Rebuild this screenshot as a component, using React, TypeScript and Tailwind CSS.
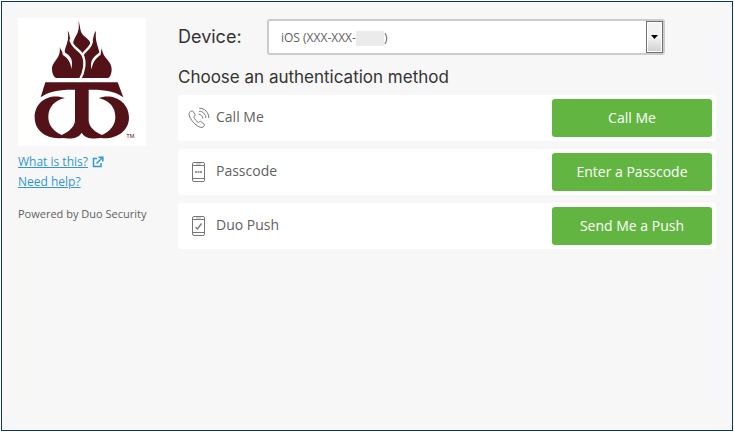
import type { ReactNode } from "react";

type MethodProps = {
  label: string;
  action: string;
  icon: ReactNode;
};

function Logo() {
  return (
    <svg viewBox="24 24 384 384" className="block w-full bg-white" role="img" aria-label="University logo">
      {/* Flames */}
      <g transform="translate(114 24)">
        <path
          fill="#521217"
          d="M24 180C15 174 12 165 12 152C13 128 40 122 35 86C39 99 45 104 51 105C47 88 66 74 59 38C68 50 62 66 76 76C76 55 98 50 91 8C100 30 92 42 113 58C123 66 127 72 127 78C140 66 132 54 144 38C140 72 152 84 154 105C160 101 161 96 162 86C160 120 192 126 191 154C191 166 188 175 181 180Z"
        />
        <path
          fill="none"
          stroke="#fff"
          strokeWidth="7"
          d="M67 64C72 90 92 92 103 110C114 130 110 160 95 186M104 111C108 98 130 92 132 68"
        />
        <path
          fill="#fff"
          d="M42 96C54 110 80 110 70 154C68 126 54 118 44 110ZM159 98C150 110 122 118 131 154C134 126 150 118 158 110Z"
        />
      </g>
      <path
        fill="#521217"
        d="M106 217H323L340 262C316 243 282 238 236 239V330C236 348 250 364 276 375C301 363 316 346 316 321C316 294 300 272 266 264C307 248 357 273 357 323C357 364 317 389 274 384C249 387 225 387 215 368C205 387 180 387 156 384C112 389 74 364 74 322C74 273 120 248 165 264C131 271 115 294 115 321C115 346 130 363 155 375C180 364 195 348 195 330V239C149 238 117 243 92 262Z"
      />
      <text x="349" y="384" fontSize="17" fill="#521217" className="font-['Liberation_Sans',sans-serif]">
        TM
      </text>
    </svg>
  );
}

function ExternalIcon() {
  return (
    <svg viewBox="0 0 12 12" className="size-3" fill="none" stroke="currentColor" strokeWidth="1.5" aria-hidden="true">
      <path d="M5 2.5H1.5V10.5H9V7M4.5 7.5L10 2M6.5 1.2H10.8V5.5" />
    </svg>
  );
}

function CallIcon() {
  return (
    <svg viewBox="0 0 22 22" className="size-[22px]" fill="none" stroke="currentColor" aria-hidden="true">
      <path d="M2.2 4.8L3.4 4.1C4.2 3.7 4.8 3.9 5.2 4.6L7 7.5C7.4 8.2 7.2 8.8 6.6 9.2L5.7 9.8C6.6 12.2 8.3 14.2 10.6 15.5L11.4 14.8C12 14.3 12.6 14.3 13.2 14.8L16 17C16.7 17.6 16.7 18.3 16.2 18.9L15.2 20C13.8 21 11.5 20.3 9.3 18.8C5.5 16.1 2.8 12.7 1.4 9C0.8 7.2 0.9 5.7 2.2 4.8Z" />
      <path d="M11.2 1.2C16.6 1.2 20.8 5.4 20.8 11M11 4.2C14.8 4.2 17.8 7.1 17.8 11M10.5 7.2C13 7.2 14.8 9 14.8 11.5" />
    </svg>
  );
}

function PhoneIcon({ children }: { children: ReactNode }) {
  return (
    <svg viewBox="0 0 22 22" className="size-[22px]" fill="none" stroke="currentColor" aria-hidden="true">
      <rect x="4.5" y="1.5" width="12" height="19" rx="1.5" />
      <path d="M4.5 4.5H16.5M4.5 17.5H16.5" />
      <path d="M8 3H13" strokeWidth="0.6" />
      {children}
    </svg>
  );
}

function Method({ label, action, icon }: MethodProps) {
  return (
    <li className="flex items-center justify-between rounded-[3px] bg-white p-1">
      <div className="flex items-center gap-1.5 pl-1.5 text-sm text-[#5f5f5f]">
        <span className="text-[#777]">{icon}</span>
        <span className="pb-0.5">{label}</span>
      </div>
      <button type="button" className="h-[38px] w-40 rounded-[3px] bg-[#63b541] text-sm text-white">
        {action}
      </button>
    </li>
  );
}

export default function App() {
  return (
    <div className="flex min-h-screen bg-white p-px font-['Open_Sans',sans-serif]">
      <div className="flex flex-1 items-start gap-8 border border-[#0f3557] bg-[#f7f7f7] p-4">
        <aside className="w-32 shrink-0">
          <Logo />
          <nav className="mt-1.5 flex flex-col text-xs leading-5 text-[#2f98d3]">
            <a href="#about" className="flex items-center gap-1">
              <span className="underline">What is this?</span>
              <ExternalIcon />
            </a>
            <a href="#help" className="underline">
              Need help?
            </a>
          </nav>
          <p className="mt-3 text-[11px] leading-5 whitespace-nowrap text-[#5f5f5f]">Powered by Duo Security</p>
        </aside>

        <main className="min-w-0 flex-1">
          <div className="flex items-center pt-px">
            <label htmlFor="device" className="w-[89px] font-[Inter,sans-serif] text-lg text-[#333]">
              Device:
            </label>
            <div className="relative mr-[51px] flex-1">
              <select
                id="device"
                className="block h-9 w-full appearance-none rounded-[3px] border-2 border-[#ccc] bg-white px-3 pt-0.5 text-xs text-[#5f5f5f]"
              >
                <option>{"iOS (XXX-XXX-" + "\u00a0".repeat(9) + ")"}</option>
              </select>
              {/* Masked digits */}
              <span className="pointer-events-none absolute top-3 left-[89px] h-[15px] w-7 bg-[#ebebeb]" />
              <span className="pointer-events-none absolute inset-y-[2px] right-[2px] flex w-[17px] items-center justify-center border border-[#707070] bg-white p-px">
                <span className="flex size-full items-center justify-center bg-linear-to-b from-[#f3f3f3] from-50% to-[#d2d2d2]">
                  <svg viewBox="0 0 7 4" className="h-1 w-[7px]" aria-hidden="true">
                    <path d="M0 0H7L3.5 4Z" />
                  </svg>
                </span>
              </span>
            </div>
          </div>

          <h1 className="mt-2.5 mb-1.5 font-[Inter,sans-serif] text-[17px] leading-6 text-[#333]">
            Choose an authentication method
          </h1>

          <ul className="flex flex-col gap-2">
            <Method label="Call Me" action="Call Me" icon={<CallIcon />} />
            <Method
              label="Passcode"
              action="Enter a Passcode"
              icon={
                <PhoneIcon>
                  <path d="M7 11H9M9.5 11H11.5M12 11H14" strokeWidth="1.6" />
                </PhoneIcon>
              }
            />
            <Method
              label="Duo Push"
              action="Send Me a Push"
              icon={
                <PhoneIcon>
                  <path d="M7.5 12L9.5 14L13.5 8.5" strokeWidth="1.3" />
                </PhoneIcon>
              }
            />
          </ul>
        </main>
      </div>
    </div>
  );
}
